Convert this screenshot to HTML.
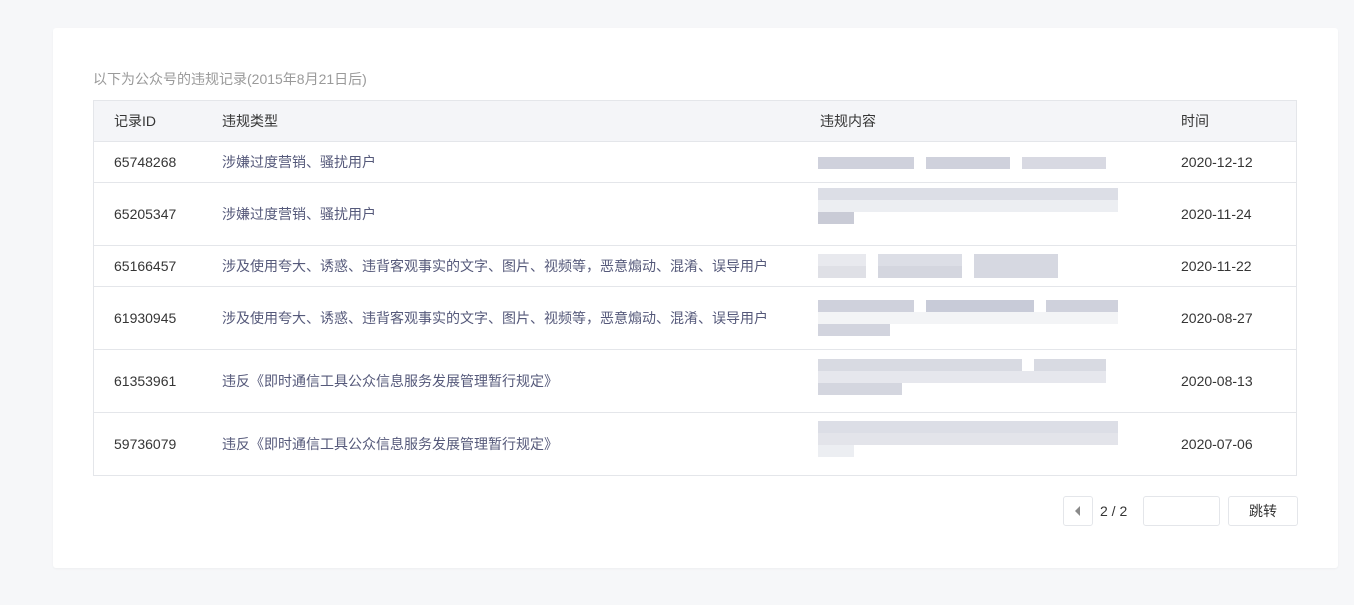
<!DOCTYPE html>
<html><head><meta charset="utf-8"><style>
body{margin:0;background:#f6f7f9;font-family:"Liberation Sans","Noto Sans CJK SC",sans-serif;font-size:14px;color:#353535;}
.card{position:absolute;left:53px;top:28px;width:1285px;height:540px;background:#fff;border-radius:3px;box-shadow:0 1px 2px rgba(0,0,0,.04);}
.title{position:absolute;left:93px;top:69px;color:#9a9a9a;font-size:14px;}
.tbl{position:absolute;left:93px;top:100px;width:1202px;border:1px solid #e4e6ea;}
.row{position:relative;border-top:1px solid #e4e6ea;}
.row.h{background:#f4f5f8;border-top:none;}
.row span{position:absolute;top:50%;transform:translateY(-50%);white-space:nowrap;}
.c1{left:20px}.c2{left:128px;color:#55597a}.c4{left:1087px}
.h .c2{color:#353535}
.c3{left:726px}
.blur{position:absolute;left:724px;}
.blur i{position:absolute;height:12px;background:#cfd1dc;}
.pg{position:absolute;top:496px;height:30px;border:1px solid #e4e6ea;border-radius:3px;box-sizing:border-box;background:#fff;}
</style></head><body>
<div class="card"></div>
<div class="title">以下为公众号的违规记录(2015年8月21日后)</div>
<div class="tbl">
<div class="row h" style="height:40px"><span class="c1">记录ID</span><span class="c2">违规类型</span><span class="c3">违规内容</span><span class="c4">时间</span></div>
<div class="row" style="height:40px"><span class="c1">65748268</span><span class="c2">涉嫌过度营销、骚扰用户</span><span class="c4">2020-12-12</span>
<div class="blur" style="top:15px"><i style="left:0;width:96px"></i><i style="left:108px;width:84px"></i><i style="left:204px;width:84px;background:#d8d9e2"></i></div></div>
<div class="row" style="height:62px"><span class="c1">65205347</span><span class="c2">涉嫌过度营销、骚扰用户</span><span class="c4">2020-11-24</span>
<div class="blur" style="top:5px"><i style="left:0;width:300px;background:#dcdee6"></i><i style="top:12px;left:0;width:300px;background:#eceef2"></i><i style="top:24px;left:0;width:36px;background:#c9cbd6"></i></div></div>
<div class="row" style="height:40px"><span class="c1">65166457</span><span class="c2">涉及使用夸大、诱惑、违背客观事实的文字、图片、视频等，恶意煽动、混淆、误导用户</span><span class="c4">2020-11-22</span>
<div class="blur" style="top:8px"><i style="left:0;width:48px;background:#e8e9ee"></i><i style="left:60px;width:84px;background:#dcdee6"></i><i style="left:156px;width:84px;background:#d6d8e1;height:24px"></i><i style="left:0;top:12px;width:48px;background:#dfe0e6"></i><i style="left:60px;top:12px;width:84px;background:#d4d6df"></i></div></div>
<div class="row" style="height:62px"><span class="c1">61930945</span><span class="c2">涉及使用夸大、诱惑、违背客观事实的文字、图片、视频等，恶意煽动、混淆、误导用户</span><span class="c4">2020-08-27</span>
<div class="blur" style="top:13px"><i style="left:0;width:96px"></i><i style="left:108px;width:108px;background:#c8cbd8"></i><i style="left:228px;width:72px"></i><i style="top:12px;left:0;width:300px;background:#f3f4f6"></i><i style="top:24px;left:0;width:72px;background:#d2d4de"></i></div></div>
<div class="row" style="height:62px"><span class="c1">61353961</span><span class="c2">违反《即时通信工具公众信息服务发展管理暂行规定》</span><span class="c4">2020-08-13</span>
<div class="blur" style="top:9px"><i style="left:0;width:204px;background:#d8dae2"></i><i style="left:216px;width:72px;background:#d8dae2"></i><i style="top:12px;left:0;width:288px;background:#e6e7ed"></i><i style="top:24px;left:0;width:84px;background:#d4d6df"></i></div></div>
<div class="row" style="height:62px"><span class="c1">59736079</span><span class="c2">违反《即时通信工具公众信息服务发展管理暂行规定》</span><span class="c4">2020-07-06</span>
<div class="blur" style="top:8px"><i style="left:0;width:300px;background:#dcdee6"></i><i style="top:12px;left:0;width:300px;background:#e3e4ea"></i><i style="top:24px;left:0;width:36px;background:#eceef2"></i></div></div>
</div>
<div class="pg" style="left:1063px;width:30px"><svg width="28" height="28" style="position:absolute;left:0;top:0"><polygon points="16,9 16,19 11,14" fill="#8a8a8a"/></svg></div>
<div style="position:absolute;left:1100px;top:503px">2 / 2</div>
<div class="pg" style="left:1143px;width:77px"></div>
<div class="pg" style="left:1228px;width:70px;text-align:center;line-height:28px">跳转</div>
</body></html>
